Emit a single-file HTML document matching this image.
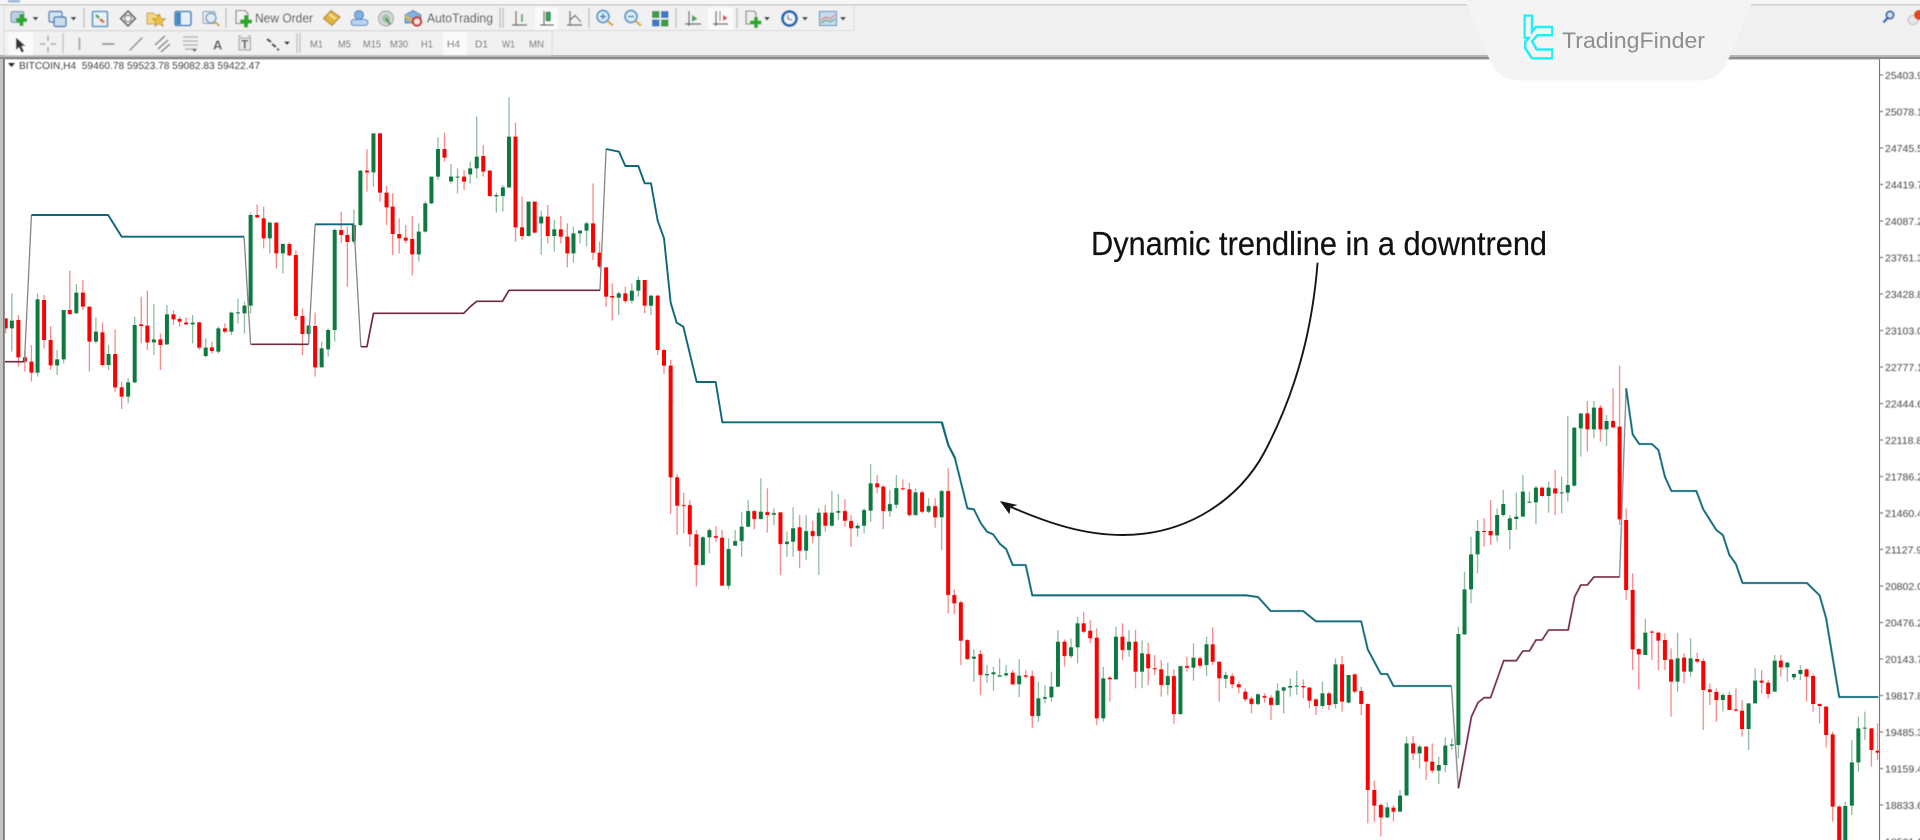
<!DOCTYPE html>
<html><head><meta charset="utf-8"><title>BITCOIN,H4</title>
<style>
html,body{margin:0;padding:0;background:#fff;width:1920px;height:840px;overflow:hidden}
svg{display:block;font-family:"Liberation Sans",sans-serif}
path,line,polyline{vector-effect:non-scaling-stroke}
.rw,.gw,.rb,.gb,.t,.m,.g{fill:none}
.rw{stroke:#f98a8a;stroke-width:1.3}
.gw{stroke:#8fbd9f;stroke-width:1.3}
.rb{stroke:#fb0006;stroke-width:4}
.gb{stroke:#11793f;stroke-width:4}
.t{stroke:#0b6878;stroke-width:1.9;stroke-linejoin:round}
.m{stroke:#6e2c45;stroke-width:1.7;stroke-linejoin:round}
.g{stroke:#858585;stroke-width:1.3}
.p{font-size:10.5px;fill:#444}
.tf{font-size:10px;fill:#666}
.sep{stroke:#c4c4c4;stroke-width:1.5}
</style></head><body>
<svg width="1920" height="840" viewBox="0 0 1920 840" xmlns="http://www.w3.org/2000/svg">
<defs>
<filter id="b" x="-2%" y="-2%" width="104%" height="104%"><feGaussianBlur stdDeviation=".45"/></filter>
<filter id="c" x="-2%" y="-2%" width="104%" height="104%"><feGaussianBlur stdDeviation=".3"/></filter>
<clipPath id="ch"><rect x="5" y="59" width="1875" height="781"/></clipPath>
</defs>
<rect width="1920" height="840" fill="#fff"/>

<g clip-path="url(#ch)" filter="url(#c)">
<!-- region A -->
<g transform="translate(0,80) scale(.40816,.33333)">
<path class="rw" d="M14 715V760M45 705V860M61 810V875M77 795V905M108 645V805M124 738V870M171 572V705M203 600V690M219 680V875M251 728V860M282 748V935M298 905V987M346 650V790M361 632V810M393 760V870M425 690V735M440 710V740M456 712V735M488 725V810M519 785V820M551 730V760M630 373V415M646 380V505M677 428V565M709 487V528M725 512V720M741 685V825M772 698V890M836 395V490M851 440V620M899 208V335M931 158V365M947 318V435M962 340V525M978 415V520M994 435V490M1010 408V587M1089 158V245M1137 270V330M1184 195V290M1200 270V350M1263 128V485M1279 350V480M1310 365V460M1342 375V490M1374 408V490M1390 430V562M1453 310V540M1469 485V565M1485 562V680M1500 610V722M1532 620V670"/>
<path class="gw" d="M29 640V815M92 640V890M140 810V885M156 690V850M187 612V700M235 712V790M266 795V870M314 895V970M330 710V910M377 672V825M409 675V795M472 705V790M504 775V832M535 740V820M567 695V765M583 655V730M599 665V760M614 398V700M661 425V520M693 490V580M756 735V770M788 785V862M804 745V830M820 445V785M867 388V490M883 270V440M915 208V320M1026 430V545M1042 365V458M1057 290V372M1073 172V300M1105 252V310M1121 265V340M1152 245V310M1168 110V295M1216 338V398M1232 315V395M1247 52V325M1295 365V470M1326 392V525M1358 420V515M1405 440V548M1421 450V490M1437 425V500M1516 635V705M1548 610V670M1564 590V650"/>
<path class="rb" d="M14 715V745M45 720V832M61 832V845M77 845V878M108 660V780M124 780V856M171 690V702M203 638V680M219 680V785M251 757V855M282 822V922M298 922V950M346 733V738M361 737V787M393 778V795M425 703V718M440 717V725M456 728V733M488 727V803M519 802V813M551 745V755M630 405V412M646 415V475M677 428V520M709 492V526M725 525V708M741 708V762M772 738V862M836 450V465M851 465V486M899 272V277M931 160V338M947 338V382M962 380V462M978 462V475M994 473V482M1010 477V523M1089 207V233M1137 290V305M1184 228V275M1200 272V348M1263 170V442M1279 442V468M1310 365V458M1342 410V468M1374 448V470M1390 470V520M1453 430V518M1469 518V560M1485 562V650M1500 648V653M1532 640V663"/>
<path class="gb" d="M29 722V745M92 658V878M140 838V856M156 690V838M187 638V700M235 755V785M266 822V855M314 907V950M330 735V907M377 778V787M409 703V793M472 728V733M504 803V828M535 745V815M567 698V755M583 697V700M599 677V700M614 405V677M661 428V475M693 492V520M756 737V762M788 805V862M804 750V808M820 450V750M867 435V485M883 272V435M915 160V277M1026 455V523M1042 370V455M1057 290V370M1073 207V290M1105 290V304M1121 290V293M1152 265V283M1168 230V265M1216 345V349M1232 322V348M1247 170V322M1295 365V468M1326 410V430M1358 448V468M1405 460V520M1421 452V460M1437 430V452M1516 640V653M1548 632V662M1564 600V632"/>
</g>
<!-- region A2 -->
<g transform="translate(570,130) scale(.33333)">
<path class="rw" d="M224 450V550M263 495V675M282 655V732M302 690V710"/>
<path class="gw" d="M243 495V555"/>
<path class="rb" d="M224 450V527M263 497V660M282 660V707M302 707V815"/>
<path class="gb" d="M243 497V527"/>
</g>
<!-- region B -->
<g transform="translate(640,400) scale(.40816,.33333)">
<path class="rw" d="M75 0V342M91 222V405M107 278V400M122 300V440M138 390V560M186 378V425M201 390V557M280 330V388M312 265V398M344 338V525M391 345V505M423 362V430M454 315V395M502 298V380M517 345V440M581 225V280M596 255V388M644 238V272M660 248V350M691 272V340M723 295V383M755 205V640M770 568V642M786 602V795M802 718V780M834 750V885M913 810V855M945 810V835M961 812V985M1040 718V800M1087 635V700M1103 660V730M1119 685V975M1151 828V905M1182 670V780M1214 690V865M1245 728V855M1261 765V825M1277 780V890M1308 808V972M1340 770V815M1372 770V805M1403 682V795M1419 785V905M1451 820V865M1467 845V880M1483 865V905M1498 890V940M1530 880V908M1546 885V960"/>
<path class="gw" d="M154 408V495M170 385V460M217 415V568M233 390V438M249 335V470M265 300V382M296 235V358M328 325V375M360 395V470M375 322V470M407 345V480M438 325V525M470 272V380M486 282V360M533 370V410M549 325V400M565 192V365M612 270V350M628 225V325M675 265V347M707 295V340M739 270V450M818 748V845M850 795V848M866 800V872M881 775V830M897 795V830M929 778V892M976 845V965M992 855V910M1008 815V905M1024 690V862M1056 715V775M1072 650V790M1135 800V965M1166 680V840M1198 690V770M1230 720V865M1293 788V885M1324 798V945M1356 730V842M1388 710V828M1435 815V865M1514 880V915M1562 850V915"/>
<path class="rb" d="M75 0V232M91 232V317M107 315V318M122 315V403M138 403V495M186 408V413M201 413V557M280 333V357M312 336V345M344 337V432M391 382V452M423 393V408M454 338V377M502 333V362M517 363V385M581 250V262M596 260V333M644 265V268M660 268V345M691 277V335M723 318V352M755 273V585M770 585V610M786 607V722M802 720V777M834 762V825M913 818V853M945 826V830M961 828V948M1040 725V768M1087 670V695M1103 692V715M1119 713V955M1151 833V838M1182 710V750M1214 725V815M1245 762V805M1261 805V808M1277 808V855M1308 828V942M1340 798V803M1372 775V797M1403 733V785M1419 785V835M1451 828V853M1467 853V862M1483 875V898M1498 896V912M1530 888V893M1546 893V915"/>
<path class="gb" d="M154 412V495M170 390V412M217 447V557M233 423V437M249 380V423M265 333V380M296 335V357M328 339V344M360 425V432M375 385V425M407 393V452M438 338V408M470 338V377M486 333V338M533 377V385M549 330V377M565 250V332M612 312V333M628 264V314M675 277V345M707 318V335M739 273V352M818 770V776M850 822V826M866 817V823M881 826V830M897 820V826M929 827V853M976 895V948M992 891V896M1008 860V892M1024 725V860M1056 742V768M1072 670V742M1135 835V955M1166 710V838M1198 725V750M1230 760V815M1293 828V855M1324 798V942M1356 773V803M1388 733V795M1435 825V836M1514 883V912M1562 872V915"/>
</g>
<!-- region C -->
<g transform="translate(1280,340) scale(.40816,.33333)">
<path class="rw" d="M57 1018V1075M72 1040V1105M88 1075V1125M120 1055V1110M152 948V1115M183 1000V1060M199 1040V1125M215 1090V1450M231 1322V1445M247 1390V1490M278 1395V1445M326 1188V1260M358 1218V1320M373 1210V1300M500 535V620M516 480V615M642 440V470M674 390V525M753 183V335M785 195V305M816 145V265M832 77V555M848 505V780M864 700V990M879 925V1050M911 870V960M927 875V990M943 880V990M958 925V1130M990 940V1030M1022 938V970M1037 955V1170M1053 1030V1095M1069 1045V1145M1101 1055V1110M1117 1045V1115M1132 1080V1190M1180 990V1060M1196 1020V1075M1227 945V1010M1290 985V1085M1306 1000V1115M1322 1090V1150M1338 1098V1222M1354 1175V1445M1370 1395V1500M1449 1165V1280M1464 1150V1260"/>
<path class="gw" d="M9 1040V1120M25 1015V1070M41 992V1065M104 1025V1105M136 955V1105M168 1005V1090M263 1388V1435M294 1350V1415M310 1190V1368M342 1215V1285M389 1250V1332M405 1192V1297M421 1195V1230M437 860V1255M452 695V885M468 590V790M484 540V700M532 505V605M547 450V530M563 525V628M579 458V570M595 405V530M611 455V490M627 438V553M658 425V518M690 410V520M705 228V485M721 262V440M737 222V350M769 183V295M800 225V318M895 835V945M974 878V1055M1006 895V1010M1085 1060V1115M1148 1090V1230M1164 985V1090M1212 945V1055M1243 965V1025M1259 1000V1020M1275 975V1020M1385 1385V1500M1401 1200V1425M1417 1130V1295M1433 1115V1200"/>
<path class="rb" d="M57 1038V1042M72 1043V1082M88 1078V1098M120 1060V1095M152 973V1085M183 1003V1055M199 1053V1092M215 1092V1350M231 1350V1397M247 1395V1432M278 1403V1415M326 1210V1240M358 1220V1265M373 1265V1292M500 573V576M516 573V586M642 443V468M674 445V460M753 220V268M785 203V268M816 243V262M832 260V538M848 540V750M864 750V928M879 927V943M911 875V878M927 878V902M943 900V960M958 958V1025M990 953V995M1022 957V965M1037 963V1050M1053 1048V1056M1069 1056V1080M1101 1065V1110M1117 1108V1112M1132 1112V1167M1180 1022V1028M1196 1028V1062M1227 962V982M1290 988V1010M1306 1008V1092M1322 1092V1098M1338 1100V1185M1354 1183V1400M1370 1400V1500M1449 1165V1230M1464 1232V1238"/>
<path class="gb" d="M9 1042V1052M25 1038V1043M41 1037V1040M104 1060V1098M136 973V1092M168 1005V1088M263 1402V1432M294 1367V1415M310 1210V1366M342 1220V1240M389 1275V1292M405 1217V1275M421 1213V1217M437 882V1215M452 748V883M468 643V748M484 573V643M532 525V586M547 492V525M563 535V570M579 530V537M595 455V530M611 485V488M627 443V487M658 443V468M690 457V460M705 435V458M721 263V437M737 220V265M769 203V268M800 243V268M895 878V945M974 955V1025M1006 955V995M1085 1065V1080M1148 1090V1167M1164 1022V1090M1212 962V1055M1243 968V982M1259 1002V1012M1275 990V1002M1385 1398V1500M1401 1267V1397M1417 1165V1267M1433 1163V1166"/>
</g>

<!-- indicator lines -->
<g transform="translate(0,80) scale(.40816,.33333)">
<path class="m" d="M12 845H60"/>
<path class="g" d="M60 845L77 405M598 470L614 795M756 792L772 433M867 433L884 800M1470 631L1485 207"/>
<path class="t" d="M77 405H265L298 470H598M772 433H867"/>
<path class="m" d="M616 793H756M884 800H899L915 700H1136L1152 680L1168 664H1231L1247 631H1470"/>
</g>
<g transform="translate(570,130) scale(.33333)">
<path class="t" d="M108 57L147 65L166 108H205L224 160H243L263 272L282 325L302 518L320 578L340 590L380 756H437L457 877H1115L1135 945L1155 985"/>
</g>
<g transform="translate(640,400) scale(.40816,.33333)">
<path class="t" d="M740 67L755 135L771 172L802 325L818 328L835 370L850 395L865 403L882 432L897 447L913 495H945L961 586H1485L1514 591L1545 633H1568"/>
</g>
<g transform="translate(1280,340) scale(.40816,.33333)">
<path class="t" d="M0 813H57L88 844H199L215 928L247 1002H263L278 1038H420"/>
<path class="g" d="M420 1038L437 1345M832 711L848 145"/>
<path class="m" d="M437 1345L469 1130L485 1088L500 1073H516L548 962H579L595 933H611L627 900H642L658 870H706L722 770L737 735H753L769 711H832"/>
<path class="t" d="M848 145L864 283L880 312H911L927 330L943 410L959 453H1020L1037 508L1069 570L1085 585L1101 645L1117 672L1133 729H1291L1322 766L1338 835L1370 1071H1466"/>
</g>
</g>

<!-- annotation -->
<text x="1091" y="255" font-size="33" fill="#111" stroke="#111" stroke-width=".25" textLength="456" lengthAdjust="spacingAndGlyphs">Dynamic trendline in a downtrend</text>
<path d="M1317.6 262.7C1313 320 1300 385 1264 453C1240 497 1190 535 1122.5 535C1085 535 1050 524 1011 507" fill="none" stroke="#151515" stroke-width="1.9"/>
<path d="M1000 501L1017.5 505L1010.6 507.3L1009.4 514.3Z" fill="#151515"/>

<!-- toolbar -->
<rect x="0" y="0" width="1920" height="55" fill="#f0f0f0"/>
<rect x="0" y="0" width="1920" height="4" fill="#f6f6f6"/>
<rect x="0" y="4" width="1920" height="1.5" fill="#cfcfcf"/>
<rect x="0" y="55" width="1920" height="2" fill="#b5b5b5"/>
<rect x="0" y="57" width="1920" height="2.4" fill="#8c8c8c"/>
<rect x="0" y="59" width="3" height="781" fill="#c4c4c4"/>
<rect x="3" y="59" width="1.8" height="781" fill="#777"/>
<rect x="1879" y="59" width="1.2" height="781" fill="#777"/>
<rect x="1880.2" y="59" width="40" height="781" fill="#fff"/>

<g filter="url(#b)">
<rect x="8" y="0" width="12" height="2.5" fill="#9ab8d8"/>
<rect x="4" y="5.5" width="850" height="25" fill="#f1f1f1" stroke="#dcdcdc"/>
<rect x="4" y="31" width="548" height="24" fill="#f1f1f1" stroke="#dcdcdc"/>
<!-- active backgrounds -->
<rect x="8" y="32" width="25" height="23" fill="#fafafa"/>
<rect x="443" y="32" width="24" height="23" fill="#fafafa"/>
<rect x="535" y="7" width="23" height="23" fill="#fafafa"/>
<rect x="708" y="7" width="25" height="23" fill="#fafafa"/>
<!-- separators -->
<path class="sep" d="M84 8V28M226 8V28M500 8V28M503 8V28M589 8V28M676 8V28M737 8V28M63 33V53M297 33V53M300 33V53"/>

<!-- row1 -->
<rect x="11" y="11.5" width="13" height="11" rx="2" fill="#b8d0e0" stroke="#5f86a8"/>
<path d="M21.5 14V26M16 20H27" stroke="#27a82b" stroke-width="4"/>
<path d="M32.5 17h6l-3 3.5z" fill="#222"/>
<rect x="49" y="11.5" width="13" height="10.5" rx="1.5" fill="#d9e6f2" stroke="#4a7fb5" stroke-width="1.4"/>
<rect x="54" y="17" width="12" height="9.5" rx="1.5" fill="#c9dcec" stroke="#4a7fb5" stroke-width="1.4"/>
<path d="M70.5 17h6l-3 3.5z" fill="#222"/>
<rect x="92.5" y="11.5" width="15" height="15" rx="1" fill="#e8f2f8" stroke="#4d94c4" stroke-width="1.6"/>
<path d="M96 15l3 3" stroke="#4aa05a" stroke-width="2.6"/><path d="M100 19l4 3.5" stroke="#e4702e" stroke-width="2.8"/>
<path d="M128 11l7.5 7.5l-7.5 7.5l-7.5-7.5z" fill="none" stroke="#5a5a5a" stroke-width="1.6"/>
<circle cx="128" cy="18.5" r="3.5" fill="none" stroke="#777" stroke-width="1.2"/>
<path d="M147 13h6l2 2h5v9h-13z" fill="#f4d77a" stroke="#c89a3a"/>
<path d="M159 14l2 4.5l4.5.3l-3.5 3l1.2 4.5l-4.2-2.5l-4.2 2.5l1.2-4.5l-3.5-3l4.5-.3z" fill="#eec23c" stroke="#b88a20" stroke-width=".8"/>
<rect x="175" y="11.5" width="16" height="14" rx="1.5" fill="#e6f0f8" stroke="#3f80b8" stroke-width="1.6"/>
<rect x="176" y="12.5" width="5" height="12" fill="#3f88c8"/>
<rect x="203" y="11.5" width="12" height="12" rx="1" fill="#e8eef2" stroke="#8a9aa5"/>
<circle cx="211" cy="18" r="5" fill="#dcecf6" stroke="#5d94ba" stroke-width="1.3"/>
<path d="M214.5 21.5l5 4.5" stroke="#d8a838" stroke-width="2"/>
<path d="M236 10.5h9l3 3v10h-12z" fill="#f2f2f2" stroke="#777" stroke-width="1.1"/>
<path d="M246 15V27.5M240 21.5H252" stroke="#27a82b" stroke-width="4"/>
<text x="255" y="22.5" font-size="12.5" fill="#3a3a3a" textLength="58" lengthAdjust="spacingAndGlyphs">New Order</text>
<path d="M331 10.5l9 6.5l-8 8.5l-8.5-7z" fill="#e3b33c" stroke="#a67a1c"/>
<path d="M329 14l7 5" stroke="#f6de8a" stroke-width="2"/>
<circle cx="359" cy="15" r="4.5" fill="#7db2e4" stroke="#3f78b8"/>
<rect x="351" y="19.5" width="17" height="6" rx="3" fill="#b8d4ee" stroke="#4f86c4"/>
<circle cx="386" cy="18.5" r="7.5" fill="#d5d7d8" stroke="#9a9d9f"/>
<circle cx="386" cy="18.5" r="4" fill="#9fc3a8"/>
<path d="M386 18.5l4 5.5" stroke="#4e9a5c" stroke-width="2.2"/>
<path d="M405 15l8-4.5l8 4.5v8h-16z" fill="#7eb3dc" stroke="#3f7cb0"/>
<path d="M405 16l9 6" stroke="#e3b340" stroke-width="2.6"/>
<circle cx="417" cy="21.5" r="4.2" fill="#f0e8e0" stroke="#d11f1f" stroke-width="2.2"/>
<text x="427" y="22.5" font-size="12.5" fill="#3a3a3a" textLength="66" lengthAdjust="spacingAndGlyphs">AutoTrading</text>
<path d="M516 11V25M512 25H527" stroke="#555" stroke-width="1.2" fill="none"/>
<path d="M522 14V22" stroke="#3c9a55" stroke-width="1.6"/>
<path d="M544 11V25M540 25H554" stroke="#555" stroke-width="1.2" fill="none"/>
<rect x="546" y="12" width="4.5" height="9" rx="1" fill="#39a257" stroke="#1d7a3a" stroke-width=".7"/>
<path d="M570 11V25M567 25H582" stroke="#555" stroke-width="1.2" fill="none"/>
<path d="M570 20L575 15.5L581 22" stroke="#666" stroke-width="1.2" fill="none"/>
<circle cx="603" cy="16.5" r="6" fill="#d9ecf8" stroke="#4f93c4" stroke-width="1.7"/>
<path d="M600 16.5h6M603 13.5v6" stroke="#3a83ba" stroke-width="1.4"/>
<path d="M607.5 21l5.5 4.5" stroke="#d8a838" stroke-width="2.2"/>
<circle cx="631" cy="16.5" r="6" fill="#d9ecf8" stroke="#4f93c4" stroke-width="1.7"/>
<path d="M628 16.5h6" stroke="#3a83ba" stroke-width="1.4"/>
<path d="M635.5 21l5.5 4.5" stroke="#d8a838" stroke-width="2.2"/>
<rect x="652" y="11" width="7.5" height="7" fill="#3a9a4c"/><rect x="661" y="11" width="7.5" height="7" fill="#3a79c8"/>
<rect x="652" y="19.5" width="7.5" height="7" fill="#3a79c8"/><rect x="661" y="19.5" width="7.5" height="7" fill="#3a9a4c"/>
<path d="M689 11V26M685 24H701" stroke="#555" stroke-width="1.2" fill="none"/>
<path d="M692 15l5.5 3.5l-5.5 3.5z" fill="#39a257"/>
<path d="M716 11V26M713 24H728" stroke="#555" stroke-width="1.2" fill="none"/>
<path d="M720 11V21" stroke="#777" stroke-width="1.1"/>
<path d="M723 15l4.5 3l-4.5 3z" fill="#d83b3b"/>
<path d="M746 11h8l2 2v11h-10z" fill="#ececec" stroke="#777" stroke-width="1.1"/>
<path d="M756 17V28M750 22.5H761.5" stroke="#27a82b" stroke-width="3.8"/>
<path d="M764 17h6l-3 3.5z" fill="#222"/>
<circle cx="789.5" cy="18.5" r="7" fill="#eef5fb" stroke="#1c66ac" stroke-width="2.8"/>
<path d="M788 15l0 4l4 1" stroke="#555" stroke-width="1.1" fill="none"/>
<path d="M802 17h6l-3 3.5z" fill="#222"/>
<rect x="819.5" y="11.5" width="17" height="14" fill="#c7dcec" stroke="#6b97bc" stroke-width="1.2"/>
<path d="M821 20l5-3l4 2l5-4" stroke="#d86a52" stroke-width="1.1" fill="none"/>
<path d="M821 23l5-3l4 2l5-3" stroke="#5ca06a" stroke-width="1.1" fill="none"/>
<path d="M840 17h6l-3 3.5z" fill="#222"/>

<!-- row2 -->
<path d="M16 37.5V50L19 47L21.5 52.5L24 51.5L21.5 46L25.5 46Z" fill="#333"/>
<path d="M48 35.5V41M48 47V52.5M40 44H45.5M50.5 44H56" stroke="#999" stroke-width="1.3"/>
<path d="M79.5 37.5V50" stroke="#999" stroke-width="1.6"/>
<path d="M102 44H114.5" stroke="#888" stroke-width="1.6"/>
<path d="M129.5 50.5L142.5 37.5" stroke="#888" stroke-width="1.5"/>
<path d="M155 45L165 36M158 49L168 40M161 52L170 44" stroke="#777" stroke-width="1.4"/>
<path d="M183 37H198M183 41H198M183 45H198M185 49H197" stroke="#aaa" stroke-width="1.2"/>
<path d="M192 49h5l-2.5 3z" fill="#666"/>
<text x="213" y="49.5" font-size="13" font-weight="bold" fill="#555">A</text>
<rect x="239" y="38" width="11.5" height="12" fill="#e8e8e8" stroke="#999"/>
<text x="241.2" y="48.5" font-size="11.5" font-weight="bold" fill="#555">T</text>
<path d="M238 36h3M248 36h3" stroke="#888"/>
<path d="M267 39l4 3M272 44l4 3M277 49l2 1" stroke="#444" stroke-width="2.2"/>
<path d="M284 41.5h6l-3 3.5z" fill="#222"/>
<g class="tf">
<text x="310" y="47.5" textLength="13" lengthAdjust="spacingAndGlyphs">M1</text>
<text x="338" y="47.5" textLength="13" lengthAdjust="spacingAndGlyphs">M5</text>
<text x="363" y="47.5" textLength="18" lengthAdjust="spacingAndGlyphs">M15</text>
<text x="390" y="47.5" textLength="18" lengthAdjust="spacingAndGlyphs">M30</text>
<text x="421" y="47.5" textLength="12" lengthAdjust="spacingAndGlyphs">H1</text>
<text x="447" y="47.5" textLength="13" lengthAdjust="spacingAndGlyphs">H4</text>
<text x="475" y="47.5" textLength="13" lengthAdjust="spacingAndGlyphs">D1</text>
<text x="502" y="47.5" textLength="13" lengthAdjust="spacingAndGlyphs">W1</text>
<text x="529" y="47.5" textLength="15" lengthAdjust="spacingAndGlyphs">MN</text>
</g>

<!-- chart header -->
<path d="M8 63h7l-3.5 4z" fill="#222"/>
<text x="19" y="69" font-size="10.5" fill="#3c3c3c" textLength="241" lengthAdjust="spacingAndGlyphs" xml:space="preserve">BITCOIN,H4  59460.78 59523.78 59082.83 59422.47</text>

<!-- far-right small icons -->
<circle cx="1890" cy="15" r="3.6" fill="#cfe0f2" stroke="#2a58a8" stroke-width="1.6"/>
<path d="M1887.5 18L1883.5 22.5" stroke="#2a58a8" stroke-width="2"/>
<ellipse cx="1913" cy="20" rx="5" ry="4.5" fill="#e8e8e8" stroke="#bbb"/>
<circle cx="1919" cy="15" r="5" fill="#e04a24"/>

<!-- price axis -->
<g class="p">
<text x="1885" y="79">25403.95</text>
<text x="1885" y="115.5">25078.10</text>
<text x="1885" y="152">24745.58</text>
<text x="1885" y="188.5">24419.74</text>
<text x="1885" y="225">24087.22</text>
<text x="1885" y="261.5">23761.37</text>
<text x="1885" y="298">23428.85</text>
<text x="1885" y="334.5">23103.01</text>
<text x="1885" y="371">22777.16</text>
<text x="1885" y="407.5">22444.64</text>
<text x="1885" y="444">22118.80</text>
<text x="1885" y="480.5">21786.28</text>
<text x="1885" y="517">21460.43</text>
<text x="1885" y="553.5">21127.91</text>
<text x="1885" y="590">20802.07</text>
<text x="1885" y="626.5">20476.22</text>
<text x="1885" y="663">20143.70</text>
<text x="1885" y="699.5">19817.86</text>
<text x="1885" y="736">19485.34</text>
<text x="1885" y="772.5">19159.49</text>
<text x="1885" y="809">18833.65</text>
<text x="1885" y="845.5">18501.13</text>
</g>
<path d="M1880 75H1883M1880 111.5H1883M1880 148H1883M1880 184.5H1883M1880 221H1883M1880 257.5H1883M1880 294H1883M1880 330.5H1883M1880 367H1883M1880 403.5H1883M1880 440H1883M1880 476.5H1883M1880 513H1883M1880 549.5H1883M1880 586H1883M1880 622.5H1883M1880 659H1883M1880 695.5H1883M1880 732H1883M1880 768.5H1883M1880 805H1883" stroke="#555" stroke-width="1"/>
</g>

<!-- watermark -->
<path d="M1465 0L1489 58Q1498 80.5 1518 80.5H1700Q1720 80.5 1729 58L1753 0Z" fill="#f4f4f4"/>
<g transform="translate(1515,8) scale(.34,.34)" filter="url(#c)">
<path d="M28 22H50V70L62 56H110V80H66L50 98L64 122H110V148H50L30 118V100L40 88H28Z" fill="none" stroke="#1ff0f4" stroke-width="2.5" stroke-linejoin="miter"/>
</g>
<text x="1562" y="48" font-size="22" fill="#8e8e8e" textLength="143" lengthAdjust="spacingAndGlyphs" filter="url(#c)">TradingFinder</text>
</svg>
</body></html>
